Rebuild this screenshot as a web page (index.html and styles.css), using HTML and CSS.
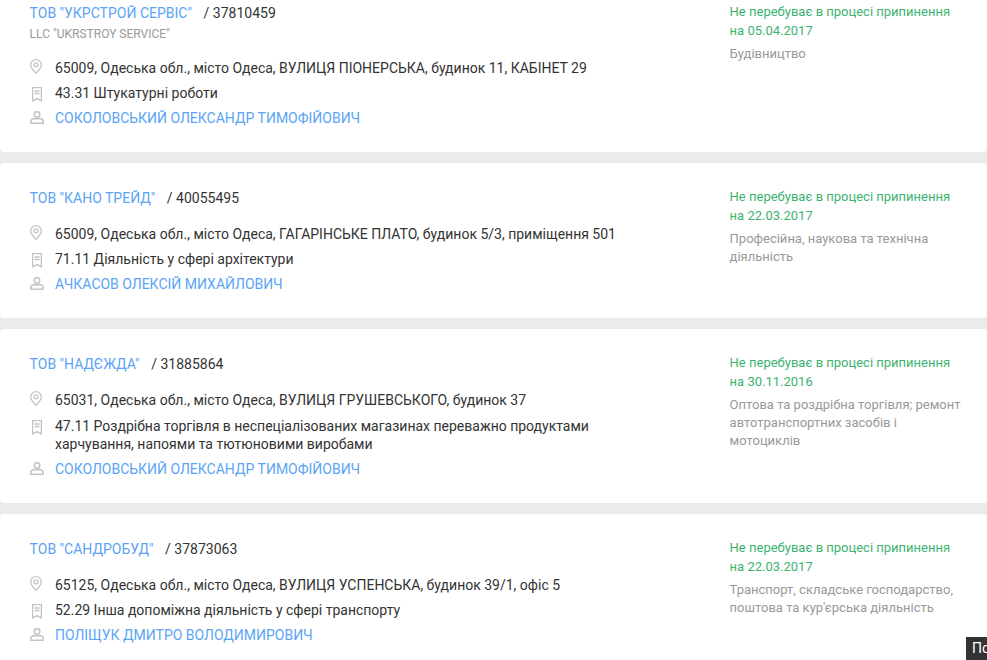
FILE: index.html
```html
<!DOCTYPE html>
<html lang="uk">
<head>
<meta charset="utf-8">
<title>Компанії</title>
<link rel="stylesheet" href="styles.css">
</head>
<body>
<svg class="defs" width="0" height="0" aria-hidden="true">
  <symbol id="i-pin" viewBox="0 0 12 15"><path d="M6 .7A5.300 5.300 0 0 0 .7 6c0 3.100 3.400 6.300 5.300 8.300 1.900-2 5.300-5.200 5.300-8.300A5.300 5.300 0 0 0 6 .7z" fill="none" stroke="currentColor" stroke-width="1.300"/><circle cx="6" cy="5.800" r="2" fill="none" stroke="currentColor" stroke-width="1.300"/></symbol>
  <symbol id="i-book" viewBox="0 0 10 15"><path d="M.6.6h8.800v13.300L5 11.600.6 13.900z M2.500 4h5 M2.500 6.500h5" fill="none" stroke="currentColor" stroke-width="1.300"/></symbol>
  <symbol id="i-user" viewBox="0 0 14 13"><circle cx="7" cy="3.500" r="2.800" fill="none" stroke="currentColor" stroke-width="1.500"/><path d="M.8 12.200v-1.400c0-2 1.400-3 3-3h6.400c1.600 0 3 1 3 3v1.400z" fill="none" stroke="currentColor" stroke-width="1.500"/></symbol>
</svg>
<main class="list">
  <article class="card">
    <div class="info">
      <h2 class="title"><a class="link" href="#">ТОВ "УКРСТРОЙ СЕРВІС"</a><span class="code">/ 37810459</span></h2>
      <p class="alt">LLC "UKRSTROY SERVICE"</p>
      <div class="row"><span class="slot"><svg class="icon pin"><use href="#i-pin"/></svg></span><span class="txt">65009, Одеська обл., місто Одеса, ВУЛИЦЯ ПІОНЕРСЬКА, будинок 11, КАБІНЕТ 29</span></div>
      <div class="row"><span class="slot"><svg class="icon book"><use href="#i-book"/></svg></span><span class="txt">43.31 Штукатурні роботи</span></div>
      <div class="row"><span class="slot"><svg class="icon user"><use href="#i-user"/></svg></span><a class="link" href="#">СОКОЛОВСЬКИЙ ОЛЕКСАНДР ТИМОФІЙОВИЧ</a></div>
    </div>
    <aside class="side">
      <p class="status">Не перебуває в процесі припинення<br>на 05.04.2017</p>
      <p class="sector">Будівництво</p>
    </aside>
  </article>
  <article class="card">
    <div class="info">
      <h2 class="title"><a class="link" href="#">ТОВ "КАНО ТРЕЙД"</a><span class="code">/ 40055495</span></h2>
      <div class="row"><span class="slot"><svg class="icon pin"><use href="#i-pin"/></svg></span><span class="txt">65009, Одеська обл., місто Одеса, ГАГАРІНСЬКЕ ПЛАТО, будинок 5/3, приміщення 501</span></div>
      <div class="row"><span class="slot"><svg class="icon book"><use href="#i-book"/></svg></span><span class="txt">71.11 Діяльність у сфері архітектури</span></div>
      <div class="row"><span class="slot"><svg class="icon user"><use href="#i-user"/></svg></span><a class="link" href="#">АЧКАСОВ ОЛЕКСІЙ МИХАЙЛОВИЧ</a></div>
    </div>
    <aside class="side">
      <p class="status">Не перебуває в процесі припинення<br>на 22.03.2017</p>
      <p class="sector">Професійна, наукова та технічна діяльність</p>
    </aside>
  </article>
  <article class="card">
    <div class="info">
      <h2 class="title"><a class="link" href="#">ТОВ "НАДЄЖДА"</a><span class="code">/ 31885864</span></h2>
      <div class="row"><span class="slot"><svg class="icon pin"><use href="#i-pin"/></svg></span><span class="txt">65031, Одеська обл., місто Одеса, ВУЛИЦЯ ГРУШЕВСЬКОГО, будинок 37</span></div>
      <div class="row"><span class="slot"><svg class="icon book"><use href="#i-book"/></svg></span><span class="txt">47.11 Роздрібна торгівля в неспеціалізованих магазинах переважно продуктами харчування, напоями та тютюновими виробами</span></div>
      <div class="row"><span class="slot"><svg class="icon user"><use href="#i-user"/></svg></span><a class="link" href="#">СОКОЛОВСЬКИЙ ОЛЕКСАНДР ТИМОФІЙОВИЧ</a></div>
    </div>
    <aside class="side">
      <p class="status">Не перебуває в процесі припинення<br>на 30.11.2016</p>
      <p class="sector">Оптова та роздрібна торгівля; ремонт автотранспортних засобів і мотоциклів</p>
    </aside>
  </article>
  <article class="card">
    <div class="info">
      <h2 class="title"><a class="link" href="#">ТОВ "САНДРОБУД"</a><span class="code">/ 37873063</span></h2>
      <div class="row"><span class="slot"><svg class="icon pin"><use href="#i-pin"/></svg></span><span class="txt">65125, Одеська обл., місто Одеса, ВУЛИЦЯ УСПЕНСЬКА, будинок 39/1, офіс 5</span></div>
      <div class="row"><span class="slot"><svg class="icon book"><use href="#i-book"/></svg></span><span class="txt">52.29 Інша допоміжна діяльність у сфері транспорту</span></div>
      <div class="row"><span class="slot"><svg class="icon user"><use href="#i-user"/></svg></span><a class="link" href="#">ПОЛІЩУК ДМИТРО ВОЛОДИМИРОВИЧ</a></div>
    </div>
    <aside class="side">
      <p class="status">Не перебуває в процесі припинення<br>на 22.03.2017</p>
      <p class="sector">Транспорт, складське господарство, поштова та кур'єрська діяльність</p>
    </aside>
  </article>
</main>
<div class="feedback">Повідомити</div>
</body>
</html>
```
FILE: styles.css
```css
html, body {
  margin: 0;
  height: 660px;
  overflow: hidden;
  background: #ebebeb;
}
body {
  font-family: Roboto, "Liberation Sans", sans-serif;
  font-size: 14px;
  color: #333;
}
.defs {
  position: absolute;
}
.list {
  display: flex;
  flex-direction: column;
  gap: 11px;
  margin-top: -22.4px;
}
.card {
  display: flex;
  background: #fff;
  border-radius: 4px;
  padding: 26px 20px 24.8px 29.6px;
}
.info {
  width: 700px;
  flex: none;
}
.side {
  flex: 1;
  min-width: 0;
  margin-top: -2px;
  font-size: 13px;
}
.title {
  margin: 0;
  font-size: 14px;
  font-weight: 400;
  line-height: 18px;
}
.link {
  color: #5ba4f5;
  text-decoration: none;
}
.code {
  margin-left: 11.7px;
  color: #333;
}
.alt {
  margin: 4px 0 0;
  font-size: 12px;
  line-height: 16px;
  color: #999;
}
.row {
  display: flex;
  align-items: flex-start;
  margin-top: 7px;
  line-height: 18.2px;
}
.title + .row {
  margin-top: 18px;
}
.alt + .row {
  margin-top: 17px;
}
.slot {
  flex: none;
  display: flex;
  width: 25.4px;
}
.txt {
  max-width: 600px;
}
.icon {
  display: block;
  color: #c4c4c4;
}
.pin {
  width: 12px;
  height: 15px;
}
.book {
  width: 10px;
  height: 15px;
  margin: 3px 0 0 2px;
}
.user {
  width: 14px;
  height: 13px;
  margin-top: 2px;
}
.side p {
  margin: 0;
}
.status {
  line-height: 19px;
  color: #3cb371;
}
.side .sector {
  margin-top: 5px;
  line-height: 18px;
  color: #999;
  width: 232px;
}
.feedback {
  position: fixed;
  left: 966px;
  top: 637px;
  width: 120px;
  height: 23px;
  background: #333;
  color: #fff;
  font-size: 14px;
  line-height: 23px;
  padding-left: 6px;
}
```
